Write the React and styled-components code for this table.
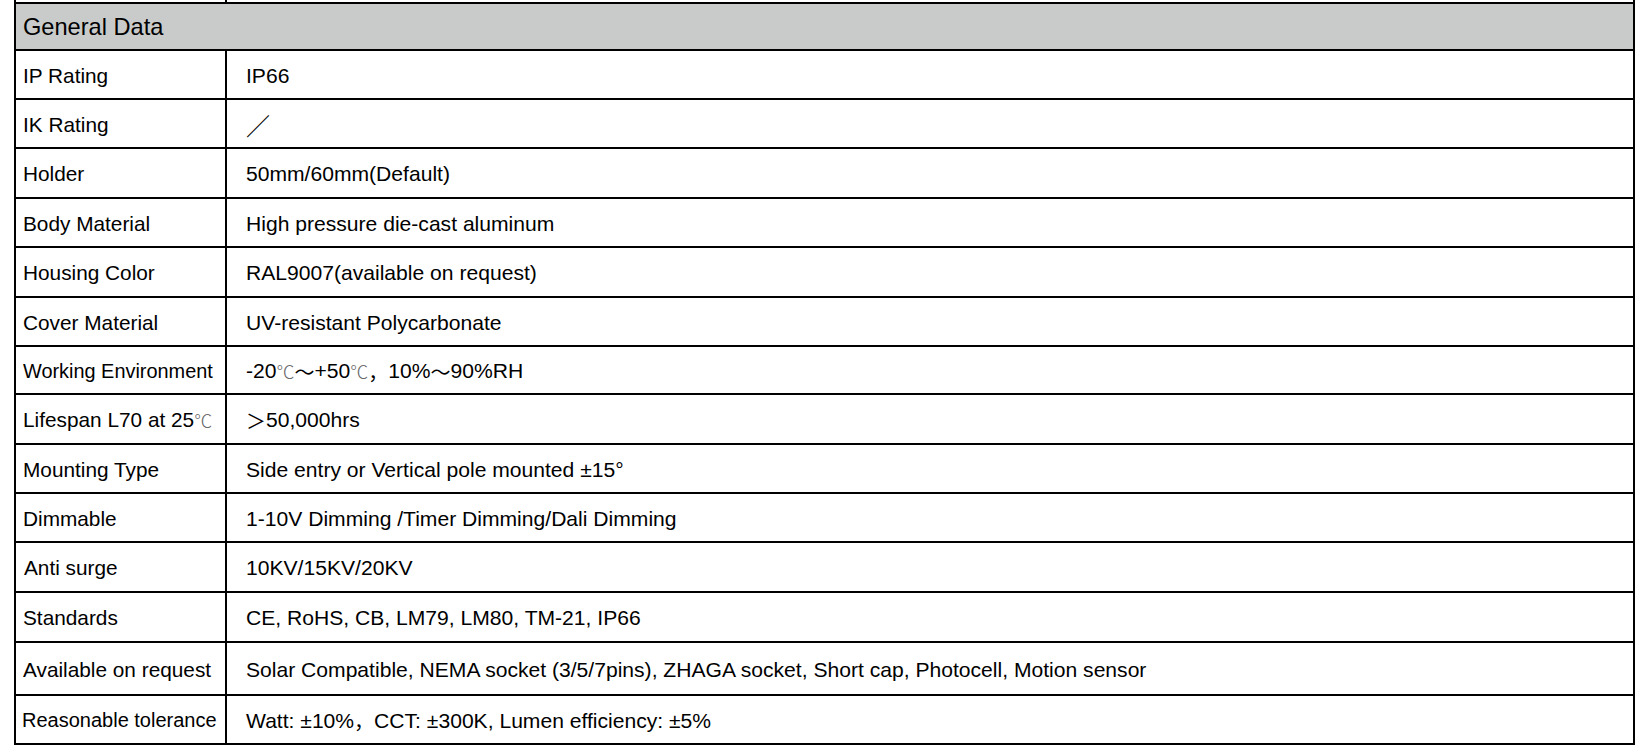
import styled, { createGlobalStyle } from 'styled-components';

const GlobalStyle = createGlobalStyle`
  body {
    margin: 0;
    background: #fff;
    font-family: 'Liberation Sans', Arial, sans-serif;
    color: #000;
  }
`;

const Page = styled.div`
  padding-left: 14px;
  width: 1621px;
`;

const Table = styled.div`
  border-left: 2px solid #000;
  border-right: 2px solid #000;
  display: flex;
  flex-direction: column;
`;

// strip of the previous table visible above the top edge
const Stub = styled.div`
  height: 2px;
  display: grid;
  grid-template-columns: 211px 1fr;
  border-bottom: 2px solid #000;
  & > div:first-child {
    border-right: 2px solid #000;
  }
`;

const Header = styled.div`
  height: 47px;
  background: #c9cbca;
  border-bottom: 2px solid #000;
  display: flex;
  align-items: center;
  padding-left: 7px;
  font-size: 23.6px;
  padding-top: 2px;
  box-sizing: border-box;
`;

const Row = styled.div`
  display: grid;
  grid-template-columns: 211px 1fr;
  height: ${(p) => p.$h}px;
  border-bottom: 2px solid #000;
`;

const Label = styled.div`
  border-right: 2px solid #000;
  display: flex;
  align-items: center;
  padding-left: ${(p) => p.$indent || 7}px;
  font-size: ${(p) => p.$size || 20.8}px;
  white-space: nowrap;
  padding-top: 2px;
`;

const Value = styled.div`
  display: flex;
  align-items: center;
  padding-left: 19px;
  font-size: 21.1px;
  white-space: nowrap;
  padding-top: 2px;
`;

const Cjk = styled.span`
  font-family: 'Noto Sans CJK SC', sans-serif;
  font-weight: ${(p) => (p.$light ? 300 : 400)};
  color: ${(p) => (p.$light ? '#6a6a6a' : '#000')};
  font-size: ${(p) => p.$size || 20}px;
`;

const rows = [
  { label: 'IP Rating', value: 'IP66', h: 47 },
  { label: 'IK Rating', value: <Cjk $size={24}>／</Cjk>, h: 47 },
  { label: 'Holder', value: '50mm/60mm(Default)', h: 48 },
  { label: 'Body Material', value: 'High pressure die-cast aluminum', h: 47 },
  { label: 'Housing Color', value: 'RAL9007(available on request)', h: 48 },
  { label: 'Cover Material', value: 'UV-resistant Polycarbonate', h: 47 },
  {
    label: 'Working Environment',
    value: (
      <>
        -20<Cjk $light $size={18}>℃</Cjk>
        <Cjk>～</Cjk>+50<Cjk $light $size={18}>℃</Cjk>
        <Cjk>，</Cjk>10%<Cjk>～</Cjk>90%RH
      </>
    ),
    h: 46,
    size: 19.9,
  },
  {
    label: (
      <>
        Lifespan L70 at 25<Cjk $light $size={18}>℃</Cjk>
      </>
    ),
    value: (
      <>
        <Cjk>＞</Cjk>50,000hrs
      </>
    ),
    h: 48,
  },
  { label: 'Mounting Type', value: 'Side entry or Vertical pole mounted ±15°', h: 47 },
  { label: 'Dimmable', value: '1-10V Dimming /Timer Dimming/Dali Dimming', h: 47 },
  { label: 'Anti surge', value: '10KV/15KV/20KV', h: 48, indent: 8 },
  { label: 'Standards', value: 'CE, RoHS, CB, LM79, LM80, TM-21, IP66', h: 48 },
  {
    label: 'Available on request',
    value: 'Solar Compatible, NEMA socket (3/5/7pins), ZHAGA socket, Short cap, Photocell, Motion sensor',
    h: 51,
  },
  {
    label: 'Reasonable tolerance',
    value: (
      <>
        Watt: ±10%<Cjk>，</Cjk>CCT: ±300K, Lumen efficiency: ±5%
      </>
    ),
    h: 47,
    size: 20,
    indent: 6,
  },
];

const App = () => {
  return (
    <>
      <GlobalStyle />
      <Page>
        <Table>
          <Stub>
            <div />
            <div />
          </Stub>
          <Header>General Data</Header>
          {rows.map((r, i) => (
            <Row key={i} $h={r.h}>
              <Label $indent={r.indent} $size={r.size}>
                {r.label}
              </Label>
              <Value>{r.value}</Value>
            </Row>
          ))}
        </Table>
      </Page>
    </>
  );
};

export default App;
